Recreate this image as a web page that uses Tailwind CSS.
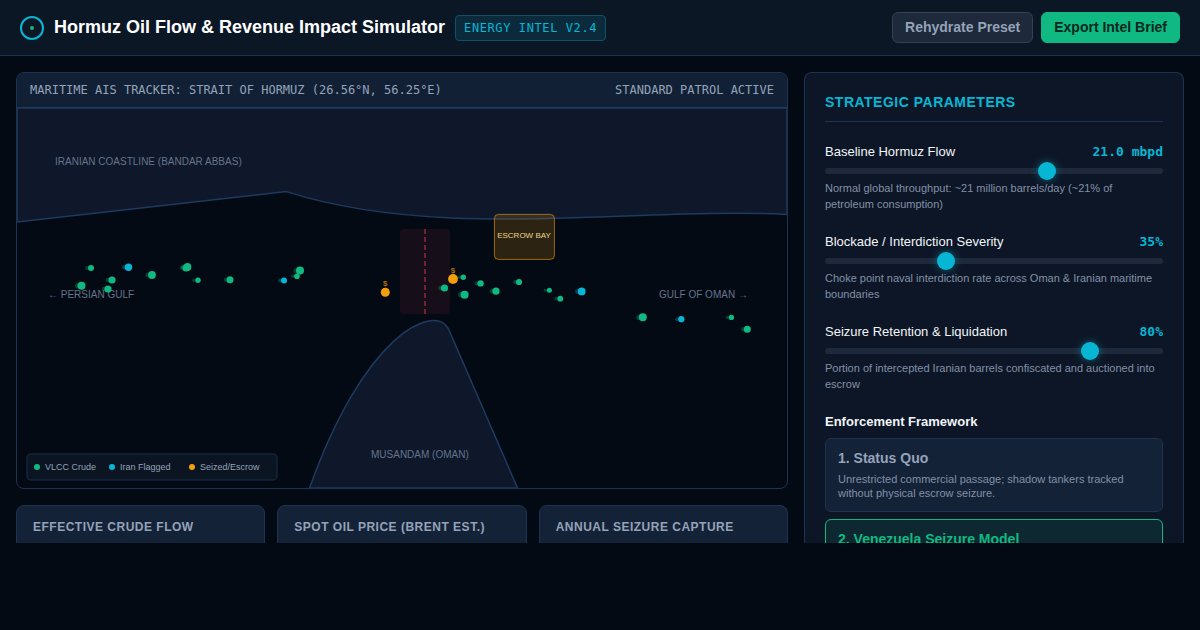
<!DOCTYPE html>
<html lang="en">
<head>
<meta charset="utf-8">
<meta name="viewport" content="width=device-width, initial-scale=1">
<title>Hormuz Oil Flow &amp; Revenue Impact Simulator</title>
<script src="https://cdn.jsdelivr.net/npm/@tailwindcss/browser@4"></script>
</head>
<body class="flex h-screen flex-col overflow-hidden bg-[#040a14] pb-[87px] font-['Liberation_Sans',sans-serif] text-[#f1f5f9]">
<header class="flex h-14 shrink-0 items-center justify-between border-b border-[#1e3350] bg-[#0c1726] px-5">
  <div class="flex items-center gap-2.5">
    <svg class="size-6" viewBox="0 0 24 24" fill="none" aria-hidden="true"><circle cx="12" cy="12" r="11" stroke="#06b6d4" stroke-width="2"/><circle cx="12" cy="12" r="2" fill="#10b981"/></svg>
    <h1 class="pb-0.5 text-lg leading-6 font-bold text-white">Hormuz Oil Flow &amp; Revenue Impact Simulator</h1>
    <span class="rounded border border-[#0c5368] bg-[#0b2b3c] px-2 py-1 font-['DejaVu_Sans_Mono',monospace] text-xs tracking-wider text-[#06b6d4]">ENERGY INTEL V2.4</span>
  </div>
  <div class="flex gap-2">
    <button class="rounded-md border border-[#334155] bg-[#1e293b] px-3 py-1.5 text-sm leading-[17px] font-bold text-[#94a3b8]">Rehydrate Preset</button>
    <button class="rounded-md border border-[#10b981] bg-[#10b981] px-3 py-1.5 text-sm leading-[17px] font-bold text-[#04271d]">Export Intel Brief</button>
  </div>
</header>
<main class="grid min-h-0 flex-1 grid-cols-[minmax(0,1fr)_380px] gap-4 overflow-hidden px-4 pt-4">
  <div class="flex flex-col gap-4">
    <section class="shrink-0 overflow-hidden rounded-lg border border-[#1e3350]">
      <div class="flex h-[35px] items-center justify-between border-b border-[#1e3a5f] bg-[#122036] px-[13px] font-['DejaVu_Sans_Mono',monospace] text-xs text-[#94a3b8]">
        <h2>MARITIME AIS TRACKER: STRAIT OF HORMUZ (26.56°N, 56.25°E)</h2>
        <span>STANDARD PATROL ACTIVE</span>
      </div>
      <svg class="block h-auto w-full font-['Liberation_Sans',sans-serif]" viewBox="0 0 770 380" role="img" aria-label="Vessel map of the Strait of Hormuz">
        <g fill="#0f172a" stroke="#1e3a5f" stroke-width="1.5">
          <path d="M0 0V114L269.5 83.6C423 133 616 99 770 106.4V0Z"/>
          <path d="M292.6 380C346.5 228 415.8 195 431.2 220.4L500.5 380Z"/>
        </g>
        <rect x="383" y="121" width="50" height="85" rx="4" fill="#f43f5e" fill-opacity=".08"/>
        <path d="M408 121V206" stroke="#f43f5e" stroke-opacity=".4" stroke-width="2" stroke-dasharray="5 3"/>
        <g fill="#64748b" font-size="10">
          <text x="38" y="57">IRANIAN COASTLINE (BANDAR ABBAS)</text>
          <text x="354" y="350">MUSANDAM (OMAN)</text>
          <text x="31" y="190">← PERSIAN GULF</text>
          <text x="642" y="190">GULF OF OMAN →</text>
        </g>
        <rect x="477.4" y="106.4" width="60" height="45" rx="4" fill="#f59e0b" fill-opacity=".17" stroke="#f59e0b" stroke-opacity=".6"/>
        <text x="507" y="130" text-anchor="middle" font-size="8" fill="#ecd78a">ESCROW BAY</text>
        <g id="vessels"></g>
        <rect x="10" y="346" width="250" height="26" rx="4" fill="#0b1421" stroke="#14243b" stroke-width="1.5"/>
        <g font-size="9" fill="#94a3b8">
          <circle cx="20" cy="359" r="3" fill="#10b981"/><text x="28" y="362">VLCC Crude</text>
          <circle cx="95" cy="359" r="3" fill="#06b6d4"/><text x="103" y="362">Iran Flagged</text>
          <circle cx="175" cy="359" r="3" fill="#f59e0b"/><text x="183" y="362">Seized/Escrow</text>
        </g>
      </svg>
    </section>
    <div class="grid grid-cols-3 gap-3 text-xs font-bold tracking-[0.5px] text-[#94a3b8]">
      <section class="h-28 rounded-lg border border-[#1e3350] bg-[#142238] px-4 py-3"><h3 class="leading-[18px]">EFFECTIVE CRUDE FLOW</h3></section>
      <section class="h-28 rounded-lg border border-[#1e3350] bg-[#142238] px-4 py-3"><h3 class="leading-[18px]">SPOT OIL PRICE (BRENT EST.)</h3></section>
      <section class="h-28 rounded-lg border border-[#1e3350] bg-[#142238] px-4 py-3"><h3 class="leading-[18px]">ANNUAL SEIZURE CAPTURE</h3></section>
    </div>
  </div>
  <aside class="rounded-t-lg border border-b-0 border-[#1e3350] bg-[#0d1626] p-5">
    <h2 class="border-b border-[#1e3350] pb-2.5 text-sm leading-[18px] font-bold tracking-[0.5px] text-[#06b6d4]">STRATEGIC PARAMETERS</h2>
    <div class="mt-5 flex flex-col gap-5">
      <div>
        <div class="flex justify-between text-[13px] leading-5"><label for="flow">Baseline Hormuz Flow</label><output for="flow" class="font-['DejaVu_Sans_Mono',monospace] font-bold text-[#06b6d4]">21.0 mbpd</output></div>
        <input id="flow" type="range" min="5" max="29" value="21" class="mt-1.5 block h-1.5 w-full appearance-none rounded-full bg-[#1e293b] [&::-webkit-slider-thumb]:size-[18px] [&::-webkit-slider-thumb]:appearance-none [&::-webkit-slider-thumb]:rounded-full [&::-webkit-slider-thumb]:bg-[#06b6d4] [&::-webkit-slider-thumb]:shadow-[0_0_8px_#06b6d480]">
        <p class="mt-1.5 text-[11px] leading-4 text-[#8290a6]">Normal global throughput: ~21 million barrels/day (~21% of petroleum consumption)</p>
      </div>
      <div>
        <div class="flex justify-between text-[13px] leading-5"><label for="severity">Blockade / Interdiction Severity</label><output for="severity" class="font-['DejaVu_Sans_Mono',monospace] font-bold text-[#06b6d4]">35%</output></div>
        <input id="severity" type="range" min="0" max="100" value="35" class="mt-1.5 block h-1.5 w-full appearance-none rounded-full bg-[#1e293b] [&::-webkit-slider-thumb]:size-[18px] [&::-webkit-slider-thumb]:appearance-none [&::-webkit-slider-thumb]:rounded-full [&::-webkit-slider-thumb]:bg-[#06b6d4] [&::-webkit-slider-thumb]:shadow-[0_0_8px_#06b6d480]">
        <p class="mt-1.5 text-[11px] leading-4 text-[#8290a6]">Choke point naval interdiction rate across Oman &amp; Iranian maritime boundaries</p>
      </div>
      <div>
        <div class="flex justify-between text-[13px] leading-5"><label for="retention">Seizure Retention &amp; Liquidation</label><output for="retention" class="font-['DejaVu_Sans_Mono',monospace] font-bold text-[#06b6d4]">80%</output></div>
        <input id="retention" type="range" min="0" max="100" value="80" class="mt-1.5 block h-1.5 w-full appearance-none rounded-full bg-[#1e293b] [&::-webkit-slider-thumb]:size-[18px] [&::-webkit-slider-thumb]:appearance-none [&::-webkit-slider-thumb]:rounded-full [&::-webkit-slider-thumb]:bg-[#06b6d4] [&::-webkit-slider-thumb]:shadow-[0_0_8px_#06b6d480]">
        <p class="mt-1.5 text-[11px] leading-4 text-[#8290a6]">Portion of intercepted Iranian barrels confiscated and auctioned into escrow</p>
      </div>
      <div class="flex flex-col gap-[7px]">
        <h3 class="pt-px text-[13px] leading-[18px] font-bold">Enforcement Framework</h3>
        <button class="rounded-md border border-[#1e3350] bg-[#142238] px-3 py-2.5 text-left">
          <span class="block text-sm leading-[18px] font-bold text-[#94a3b8]">1. Status Quo</span>
          <span class="mt-[5px] block pb-px text-[11px] leading-[14px] text-[#8290a6]">Unrestricted commercial passage; shadow tankers tracked without physical escrow seizure.</span>
        </button>
        <button class="rounded-md border border-[#10b981] bg-[#0d2830] px-3 pt-2.5 pb-10 text-left">
          <span class="block text-sm leading-[18px] font-bold text-[#10b981]">2. Venezuela Seizure Model</span>
        </button>
      </div>
    </div>
  </aside>
</main>
<script>
// Vessels: x, y, radius, type (g = crude, b = Iran flagged, s = seized)
const vessels = [
  [74,160,3,'g'],[64.5,177.7,4,'g'],[95,172,3.6,'g'],[91,181,3.6,'g'],[111.5,159.3,3.7,'b'],
  [135,167,3.9,'g'],[169,160,3.5,'g'],[170.5,159,3.9,'g'],[181,172.3,2.7,'g'],[213,171.7,3.5,'g'],
  [267,172.5,3,'b'],[280,168.3,2.8,'g'],[283,162.5,4,'g'],
  [427.5,180,3.6,'g'],[446.3,169.2,2.7,'g'],[447.6,186.7,4,'g'],[463.6,175.4,3.2,'g'],
  [479,183.2,3.6,'g'],[502,174,3.1,'g'],[532.4,182.2,2.5,'g'],[543.3,190.7,2.9,'g'],
  [564.7,183.4,3.9,'b'],[625.8,209.3,4,'g'],[664.3,211.2,3.1,'b'],[714.4,209.4,2.7,'g'],
  [730.3,221.3,3.5,'g'],[368.3,184.3,4.5,'s'],[436,171,4.9,'s']
];
const colors = { g: '#10b981', b: '#06b6d4', s: '#f59e0b' };
document.getElementById('vessels').innerHTML = vessels.map(([x, y, r, t]) =>
  (t === 's'
    ? `<text x="${x}" y="${y - 6}" text-anchor="middle" font-size="8" font-weight="bold" fill="#f59e0b" fill-opacity=".7">$</text>`
    : `<circle cx="${x - 4}" cy="${y}" r="${r * 0.65}" fill="${colors[t]}" fill-opacity=".3"/>`) +
  `<circle cx="${x}" cy="${y}" r="${r}" fill="${colors[t]}"/>`).join('');
</script>
</body>
</html>
